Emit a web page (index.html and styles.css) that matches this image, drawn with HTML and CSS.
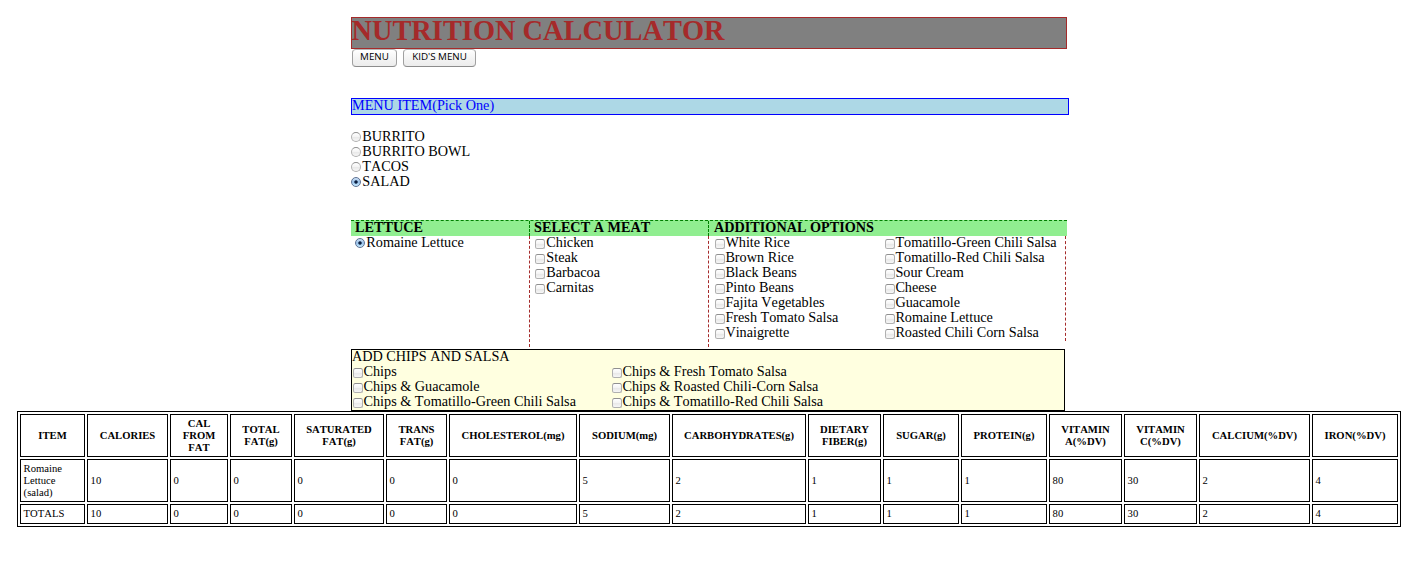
FILE: index.html
```html
<!DOCTYPE html>
<html lang="en">
<head>
<meta charset="utf-8">
<title>Nutrition Calculator</title>
<link rel="stylesheet" href="styles.css">
</head>
<body>
<main class="calculator">
  <h1 class="title">NUTRITION CALCULATOR</h1>
  <div class="buttons">
    <button class="btn btn-menu">MENU</button>
    <button class="btn btn-kids">KID'S MENU</button>
  </div>
  <div class="menu-bar">MENU ITEM(Pick One)</div>
  <div class="menu-items">
    <label class="choice"><input type="radio" name="item">BURRITO</label>
    <label class="choice"><input type="radio" name="item">BURRITO BOWL</label>
    <label class="choice"><input type="radio" name="item">TACOS</label>
    <label class="choice"><input type="radio" name="item" checked>SALAD</label>
  </div>
  <div class="option-heads">
    <div class="head">LETTUCE</div>
    <div class="head">SELECT A MEAT</div>
    <div class="head head-last">ADDITIONAL OPTIONS</div>
  </div>
  <div class="options">
    <div class="option-col col-lettuce">
      <label class="choice"><input type="radio" name="lettuce" checked>Romaine Lettuce</label>
    </div>
    <div class="option-col">
      <label class="choice"><input type="checkbox">Chicken</label>
      <label class="choice"><input type="checkbox">Steak</label>
      <label class="choice"><input type="checkbox">Barbacoa</label>
      <label class="choice"><input type="checkbox">Carnitas</label>
    </div>
    <div class="option-col extras">
      <div>
        <label class="choice"><input type="checkbox">White Rice</label>
        <label class="choice"><input type="checkbox">Brown Rice</label>
        <label class="choice"><input type="checkbox">Black Beans</label>
        <label class="choice"><input type="checkbox">Pinto Beans</label>
        <label class="choice"><input type="checkbox">Fajita Vegetables</label>
        <label class="choice"><input type="checkbox">Fresh Tomato Salsa</label>
        <label class="choice"><input type="checkbox">Vinaigrette</label>
      </div>
      <div>
        <label class="choice"><input type="checkbox">Tomatillo-Green Chili Salsa</label>
        <label class="choice"><input type="checkbox">Tomatillo-Red Chili Salsa</label>
        <label class="choice"><input type="checkbox">Sour Cream</label>
        <label class="choice"><input type="checkbox">Cheese</label>
        <label class="choice"><input type="checkbox">Guacamole</label>
        <label class="choice"><input type="checkbox">Romaine Lettuce</label>
        <label class="choice"><input type="checkbox">Roasted Chili Corn Salsa</label>
      </div>
    </div>
  </div>
  <div class="chips">
    <div class="chips-title">ADD CHIPS AND SALSA</div>
    <div class="chips-grid">
      <label class="choice"><input type="checkbox">Chips</label>
      <label class="choice"><input type="checkbox">Chips &amp; Fresh Tomato Salsa</label>
      <label class="choice"><input type="checkbox">Chips &amp; Guacamole</label>
      <label class="choice"><input type="checkbox">Chips &amp; Roasted Chili-Corn Salsa</label>
      <label class="choice"><input type="checkbox">Chips &amp; Tomatillo-Green Chili Salsa</label>
      <label class="choice"><input type="checkbox">Chips &amp; Tomatillo-Red Chili Salsa</label>
    </div>
  </div>
</main>
<table class="facts">
  <colgroup>
    <col style="width:65px"><col style="width:81px"><col style="width:58px"><col style="width:62px">
    <col style="width:90px"><col style="width:61px"><col style="width:128px"><col style="width:91px">
    <col style="width:134px"><col style="width:73px"><col style="width:76px"><col style="width:86px">
    <col style="width:73px"><col style="width:73px"><col style="width:111px"><col style="width:86px">
  </colgroup>
  <tr class="facts-head">
    <th>ITEM</th><th>CALORIES</th><th>CAL<br>FROM<br>FAT</th><th>TOTAL<br>FAT(g)</th>
    <th>SATURATED<br>FAT(g)</th><th>TRANS<br>FAT(g)</th><th>CHOLESTEROL(mg)</th><th>SODIUM(mg)</th>
    <th>CARBOHYDRATES(g)</th><th>DIETARY<br>FIBER(g)</th><th>SUGAR(g)</th><th>PROTEIN(g)</th>
    <th>VITAMIN<br>A(%DV)</th><th>VITAMIN<br>C(%DV)</th><th>CALCIUM(%DV)</th><th>IRON(%DV)</th>
  </tr>
  <tr class="facts-item">
    <td>Romaine<br>Lettuce<br>(salad)</td><td>10</td><td>0</td><td>0</td><td>0</td><td>0</td><td>0</td><td>5</td>
    <td>2</td><td>1</td><td>1</td><td>1</td><td>80</td><td>30</td><td>2</td><td>4</td>
  </tr>
  <tr class="facts-total">
    <td>TOTALS</td><td>10</td><td>0</td><td>0</td><td>0</td><td>0</td><td>0</td><td>5</td>
    <td>2</td><td>1</td><td>1</td><td>1</td><td>80</td><td>30</td><td>2</td><td>4</td>
  </tr>
</table>
</body>
</html>
```
FILE: styles.css
```css
* { box-sizing: border-box; }

body {
  margin: 0;
  padding: 17px 17px 0;
  background: #fff;
  color: #000;
  font: 14.23px/15px "Liberation Serif", "Times New Roman", serif;
  font-kerning: none;
}

.calculator {
  width: 716px;
  margin-left: 334px;
}

.title {
  height: 32px;
  margin: 0;
  border: 1px solid brown;
  background: gray;
  color: brown;
  font-size: 28.4px;
  line-height: 26px;
  text-indent: -0.6px;
}

.buttons {
  display: flex;
  gap: 6px;
  height: 49px;
  padding-left: 1px;
}

.btn {
  height: 18px;
  padding: 0;
  border: 1px solid #a0a0a0;
  border-top-color: #b4b4b4;
  border-bottom-color: #8c8c8c;
  border-radius: 4px;
  background: linear-gradient(#fff, #f4f4f4 50%, #ececec);
  color: #000;
  font: 500 9.8px/14px "Open Sans", "Noto Sans", sans-serif;
  padding-bottom: 2px;
}

.btn-menu { width: 45px; }
.btn-kids { width: 73px; }

.menu-bar {
  width: 718px;
  height: 17px;
  border: 1px solid blue;
  background: lightblue;
  color: blue;
  line-height: 13px;
}

.menu-items {
  height: 105px;
  padding-top: 14px;
}

.choice {
  display: flex;
  height: 15px;
  white-space: nowrap;
}

.choice input {
  flex: none;
  appearance: none;
  width: 10px;
  height: 10px;
  margin: 4px 1.3px 0 0;
  border: 1px solid #b0b0b0;
  border-top-color: #909090;
  border-radius: 2.5px;
  background: linear-gradient(#fff, #f4f4f4 45%, #e9e9e9 55%, #f6f6f6);
}

.choice input[type="radio"] {
  margin-top: 3px;
  border-radius: 50%;
}

.choice input[type="radio"]:checked {
  border-color: #5d7193;
  background: radial-gradient(circle at 4px 4px, #0a1e40 0 1.2px, transparent 2.2px), linear-gradient(#d0e2f5, #96c0ea 50%, #c8ecff);
}

.option-heads {
  display: flex;
  height: 16px;
  border-top: 1px dashed green;
  background: lightgreen;
  font-weight: bold;
}

.head {
  width: 179px;
  padding-left: 4px;
  border-right: 1px dashed green;
  line-height: 13px;
}

.head-last {
  width: 358px;
  padding-left: 5px;
  border-right: 0;
}

.options {
  display: flex;
  align-items: flex-start;
  height: 113px;
}

.option-col {
  width: 179px;
  height: 111px;
  padding-left: 5px;
  border-right: 1px dashed brown;
}

.option-col .choice:first-child { margin-top: -1px; }

.col-lettuce { padding-left: 4px; }

.extras {
  display: flex;
  width: 357px;
  height: 105px;
  padding-left: 6px;
}

.extras > div { width: 170px; }
.extras .choice input { margin-right: 0.4px; }

.chips {
  width: 714px;
  height: 62px;
  border: 1px solid #000;
  background: lightyellow;
}

.chips-title {
  height: 14px;
  line-height: 13px;
}

.chips-grid {
  display: grid;
  grid-template-columns: 259px 1fr;
  padding-left: 1px;
}

.chips .choice input { margin-right: 0.5px; }

.facts {
  table-layout: fixed;
  width: 1384px;
  height: 116px;
  border: 1px solid #000;
  border-spacing: 2px;
  font-size: 10.65px;
  line-height: 12px;
}

.facts th,
.facts td {
  padding: 2px;
  border: 1px solid #000;
}

.facts td { padding: 1px 2px 1px 2.6px; }

.facts-head { height: 43px; }
.facts-item { height: 43px; }
.facts-total { height: 20px; }
```
